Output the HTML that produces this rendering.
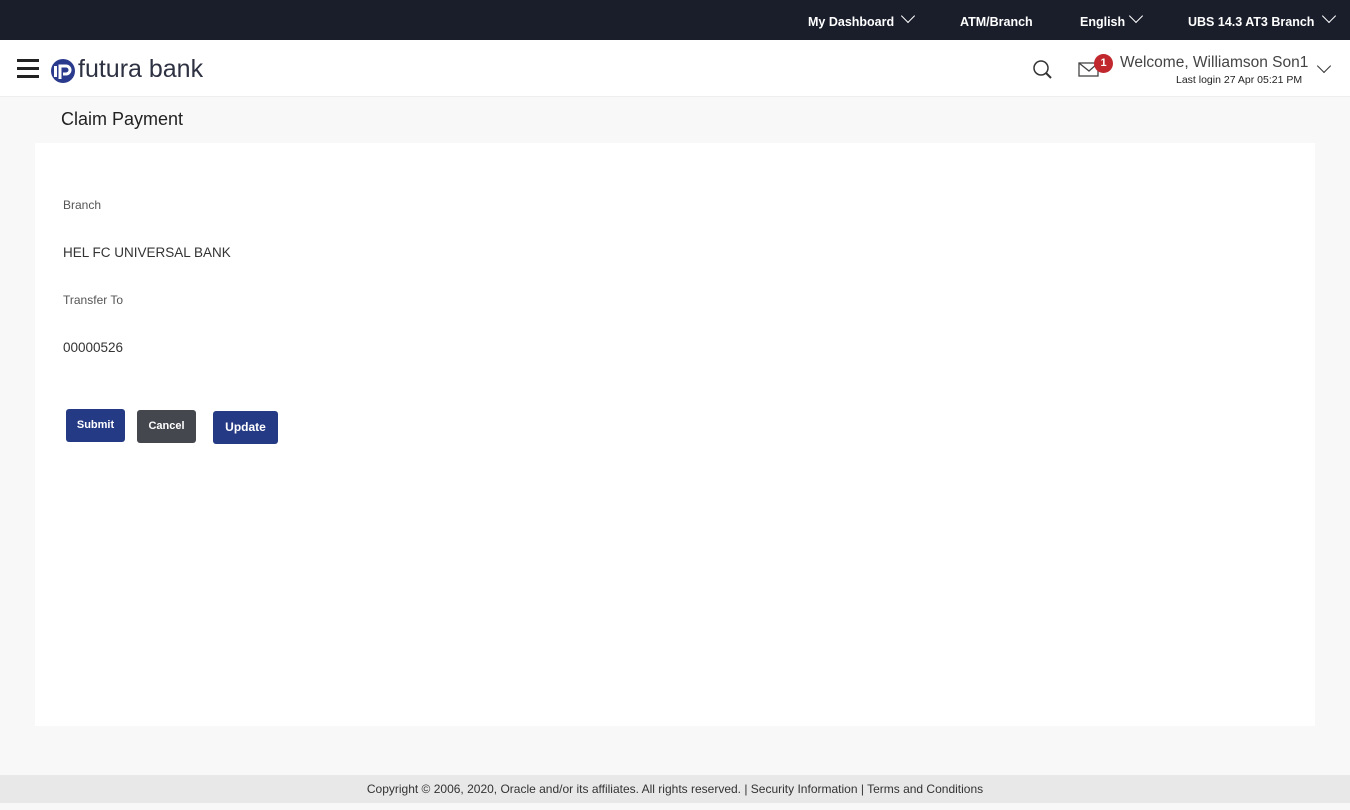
<!DOCTYPE html>
<html><head><style>
*{margin:0;padding:0;box-sizing:border-box}
body{width:1350px;height:810px;background:#f8f8f8;font-family:"Liberation Sans",sans-serif;position:relative;overflow:hidden;color:#333}
.top{position:absolute;left:0;top:0;width:1350px;height:40px;background:#1a1e2b;color:#fff;font-size:12.5px;font-weight:bold}
.top span{position:absolute;top:15px}
.chev{display:inline-block;width:10px;height:10px;border-right:1.5px solid #fff;border-bottom:1.5px solid #fff;transform:rotate(45deg);position:absolute}
.hdr{position:absolute;left:0;top:40px;width:1350px;height:57px;background:#fff;border-bottom:1px solid #eee}
.card{position:absolute;left:35px;top:143px;width:1280px;height:583px;background:#fff}
.lbl{position:absolute;left:63px;font-size:12px;color:#555}
.val{position:absolute;left:63px;font-size:13.5px;color:#333}
.btn{position:absolute;top:409px;height:33px;border-radius:3px;color:#fff;font-size:11px;font-weight:bold;text-align:center;line-height:33px}
.foot{position:absolute;left:0;top:775px;width:1350px;height:28px;background:#e8e8e8;font-size:12px;color:#333;text-align:center;line-height:28px}
</style></head><body>
<div class="top">
<span style="left:808px">My Dashboard</span><i class="chev" style="left:903px;top:11px"></i>
<span style="left:960px">ATM/Branch</span>
<span style="left:1080px">English</span><i class="chev" style="left:1131px;top:11px"></i>
<span style="left:1188px">UBS 14.3 AT3 Branch</span><i class="chev" style="left:1324px;top:11px"></i>
</div>
<div class="hdr">
<div style="position:absolute;left:17px;top:19px;width:22px;height:3px;background:#222;box-shadow:0 8px 0 #222,0 16px 0 #222"></div>
<svg style="position:absolute;left:50px;top:18px" width="26" height="26" viewBox="0 0 26 26"><circle cx="13" cy="13" r="12" fill="#2a3a8c"/><rect x="4" y="8" width="3" height="11" fill="#fff"/><path d="M10 21V8h6a4 4 0 0 1 0 8h-3" stroke="#fff" stroke-width="3" fill="none"/></svg>
<div style="position:absolute;left:78px;top:15px;font-size:25px;color:#2d3142">futura bank</div>
<svg style="position:absolute;left:1032px;top:19px" width="22" height="22"><circle cx="9" cy="9" r="7" stroke="#333" stroke-width="1.5" fill="none"/><line x1="14" y1="14" x2="19" y2="19" stroke="#333" stroke-width="2"/></svg>
<svg style="position:absolute;left:1078px;top:22px" width="22" height="16"><rect x="1" y="1" width="19" height="13" stroke="#444" fill="none" stroke-width="1.3"/><path d="M1 1l10 8 9-8" stroke="#444" fill="none" stroke-width="1.3"/></svg>
<div style="position:absolute;left:1094px;top:14px;width:19px;height:19px;border-radius:50%;background:#c0282d;color:#fff;font-size:11px;font-weight:bold;text-align:center;line-height:19px">1</div>
<div style="position:absolute;left:1120px;top:14px;font-size:15.5px;color:#444">Welcome, Williamson Son1</div>
<div style="position:absolute;left:1176px;top:34px;font-size:10.5px;color:#222">Last login 27 Apr 05:21 PM</div>
<i class="chev" style="left:1319px;top:21px;border-color:#333"></i>
</div>
<div style="position:absolute;left:61px;top:109px;font-size:18px;color:#222">Claim Payment</div>
<div class="card"></div>
<div class="lbl" style="top:198px">Branch</div>
<div class="val" style="top:245px">HEL FC UNIVERSAL BANK</div>
<div class="lbl" style="top:293px">Transfer To</div>
<div class="val" style="top:340px">00000526</div>
<div class="btn" style="left:66px;width:59px;background:#253a84">Submit</div>
<div class="btn" style="left:137px;top:410px;width:59px;background:#45474f">Cancel</div>
<div class="btn" style="left:213px;top:411px;width:65px;background:#253a84;font-size:12px">Update</div>
<div class="foot">Copyright © 2006, 2020, Oracle and/or its affiliates. All rights reserved. | Security Information | Terms and Conditions</div>
</body></html>
